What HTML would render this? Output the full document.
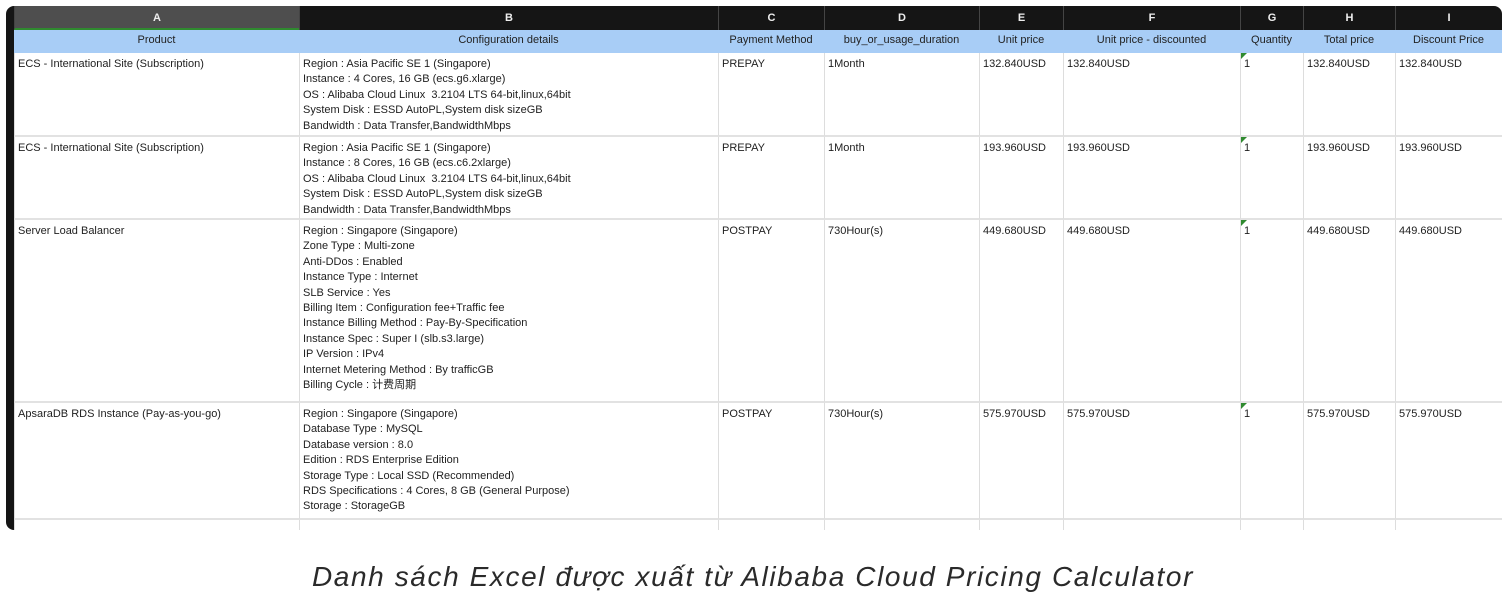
<!DOCTYPE html>
<html><head><meta charset="utf-8"><style>
body{margin:0;width:1506px;height:608px;background:#fff;position:relative;overflow:hidden;font-family:"Liberation Sans","Noto Sans CJK SC",sans-serif;}
.frame{position:absolute;left:6px;top:6px;width:1496px;height:524px;background:#fff;border-radius:8px 8px 0 8px;overflow:hidden;}
.hd{position:absolute;top:0;height:24px;background:#151515;color:#eee;font-size:11px;font-weight:bold;text-align:center;line-height:24px;box-sizing:border-box;border-left:1px solid #444;}
.bl{position:absolute;top:24px;height:23px;background:#a8cdf6;color:#222;font-size:11px;text-align:center;line-height:20px;box-sizing:border-box;}
.c{position:absolute;font-size:11px;color:#1e1e1e;line-height:15.4px;padding:4px 0 0 3px;box-sizing:border-box;border-left:1px solid #ddd;border-bottom:2px solid #e2e2e2;white-space:nowrap;}
.q::before{content:"";position:absolute;left:0;top:0;border-top:6px solid #2f8a2f;border-right:6px solid transparent;}
.cap{position:absolute;left:0;width:1506px;top:561px;text-align:center;font-style:italic;font-size:28px;color:#2a2a2a;letter-spacing:1.6px;}
</style></head><body>
<div class="frame">
<div class="hd" style="left:8px;width:285px;background:#4e4e4e;border-bottom:2px solid #2f8a2f">A</div>
<div class="hd" style="left:293px;width:419px">B</div>
<div class="hd" style="left:712px;width:106px">C</div>
<div class="hd" style="left:818px;width:155px">D</div>
<div class="hd" style="left:973px;width:84px">E</div>
<div class="hd" style="left:1057px;width:177px">F</div>
<div class="hd" style="left:1234px;width:63px">G</div>
<div class="hd" style="left:1297px;width:92px">H</div>
<div class="hd" style="left:1389px;width:107px">I</div>
<div class="bl" style="left:8px;width:285px">Product</div>
<div class="bl" style="left:293px;width:419px">Configuration details</div>
<div class="bl" style="left:712px;width:106px">Payment Method</div>
<div class="bl" style="left:818px;width:155px">buy_or_usage_duration</div>
<div class="bl" style="left:973px;width:84px">Unit price</div>
<div class="bl" style="left:1057px;width:177px">Unit price - discounted</div>
<div class="bl" style="left:1234px;width:63px">Quantity</div>
<div class="bl" style="left:1297px;width:92px">Total price</div>
<div class="bl" style="left:1389px;width:107px">Discount Price</div>
</div>
<div class="cap">Danh sách Excel được xuất từ Alibaba Cloud Pricing Calculator</div>
<div style="position:absolute;left:6px;top:6px;width:1496px;height:524px;overflow:hidden;pointer-events:none">
<div class="c" style="left:8px;top:47px;width:285px;height:84px">ECS - International Site (Subscription)</div>
<div class="c" style="left:293px;top:47px;width:419px;height:84px">Region : Asia Pacific SE 1 (Singapore)<br>Instance : 4 Cores, 16 GB (ecs.g6.xlarge)<br>OS : Alibaba Cloud Linux&nbsp; 3.2104 LTS 64-bit,linux,64bit<br>System Disk : ESSD AutoPL,System disk sizeGB<br>Bandwidth : Data Transfer,BandwidthMbps</div>
<div class="c" style="left:712px;top:47px;width:106px;height:84px">PREPAY</div>
<div class="c" style="left:818px;top:47px;width:155px;height:84px">1Month</div>
<div class="c" style="left:973px;top:47px;width:84px;height:84px">132.840USD</div>
<div class="c" style="left:1057px;top:47px;width:177px;height:84px">132.840USD</div>
<div class="c q" style="left:1234px;top:47px;width:63px;height:84px">1</div>
<div class="c" style="left:1297px;top:47px;width:92px;height:84px">132.840USD</div>
<div class="c" style="left:1389px;top:47px;width:107px;height:84px">132.840USD</div>

<div class="c" style="left:8px;top:131px;width:285px;height:83px">ECS - International Site (Subscription)</div>
<div class="c" style="left:293px;top:131px;width:419px;height:83px">Region : Asia Pacific SE 1 (Singapore)<br>Instance : 8 Cores, 16 GB (ecs.c6.2xlarge)<br>OS : Alibaba Cloud Linux&nbsp; 3.2104 LTS 64-bit,linux,64bit<br>System Disk : ESSD AutoPL,System disk sizeGB<br>Bandwidth : Data Transfer,BandwidthMbps</div>
<div class="c" style="left:712px;top:131px;width:106px;height:83px">PREPAY</div>
<div class="c" style="left:818px;top:131px;width:155px;height:83px">1Month</div>
<div class="c" style="left:973px;top:131px;width:84px;height:83px">193.960USD</div>
<div class="c" style="left:1057px;top:131px;width:177px;height:83px">193.960USD</div>
<div class="c q" style="left:1234px;top:131px;width:63px;height:83px">1</div>
<div class="c" style="left:1297px;top:131px;width:92px;height:83px">193.960USD</div>
<div class="c" style="left:1389px;top:131px;width:107px;height:83px">193.960USD</div>

<div class="c" style="left:8px;top:214px;width:285px;height:183px">Server Load Balancer</div>
<div class="c" style="left:293px;top:214px;width:419px;height:183px">Region : Singapore (Singapore)<br>Zone Type : Multi-zone<br>Anti-DDos : Enabled<br>Instance Type : Internet<br>SLB Service : Yes<br>Billing Item : Configuration fee+Traffic fee<br>Instance Billing Method : Pay-By-Specification<br>Instance Spec : Super I (slb.s3.large)<br>IP Version : IPv4<br>Internet Metering Method : By trafficGB<br>Billing Cycle : 计费周期</div>
<div class="c" style="left:712px;top:214px;width:106px;height:183px">POSTPAY</div>
<div class="c" style="left:818px;top:214px;width:155px;height:183px">730Hour(s)</div>
<div class="c" style="left:973px;top:214px;width:84px;height:183px">449.680USD</div>
<div class="c" style="left:1057px;top:214px;width:177px;height:183px">449.680USD</div>
<div class="c q" style="left:1234px;top:214px;width:63px;height:183px">1</div>
<div class="c" style="left:1297px;top:214px;width:92px;height:183px">449.680USD</div>
<div class="c" style="left:1389px;top:214px;width:107px;height:183px">449.680USD</div>

<div class="c" style="left:8px;top:397px;width:285px;height:117px">ApsaraDB RDS Instance (Pay-as-you-go)</div>
<div class="c" style="left:293px;top:397px;width:419px;height:117px">Region : Singapore (Singapore)<br>Database Type : MySQL<br>Database version : 8.0<br>Edition : RDS Enterprise Edition<br>Storage Type : Local SSD (Recommended)<br>RDS Specifications : 4 Cores, 8 GB (General Purpose)<br>Storage : StorageGB</div>
<div class="c" style="left:712px;top:397px;width:106px;height:117px">POSTPAY</div>
<div class="c" style="left:818px;top:397px;width:155px;height:117px">730Hour(s)</div>
<div class="c" style="left:973px;top:397px;width:84px;height:117px">575.970USD</div>
<div class="c" style="left:1057px;top:397px;width:177px;height:117px">575.970USD</div>
<div class="c q" style="left:1234px;top:397px;width:63px;height:117px">1</div>
<div class="c" style="left:1297px;top:397px;width:92px;height:117px">575.970USD</div>
<div class="c" style="left:1389px;top:397px;width:107px;height:117px">575.970USD</div>

<div class="c" style="left:8px;top:514px;width:285px;height:20px;border-bottom:none"></div>
<div class="c" style="left:293px;top:514px;width:419px;height:20px;border-bottom:none"></div>
<div class="c" style="left:712px;top:514px;width:106px;height:20px;border-bottom:none"></div>
<div class="c" style="left:818px;top:514px;width:155px;height:20px;border-bottom:none"></div>
<div class="c" style="left:973px;top:514px;width:84px;height:20px;border-bottom:none"></div>
<div class="c" style="left:1057px;top:514px;width:177px;height:20px;border-bottom:none"></div>
<div class="c" style="left:1234px;top:514px;width:63px;height:20px;border-bottom:none"></div>
<div class="c" style="left:1297px;top:514px;width:92px;height:20px;border-bottom:none"></div>
<div class="c" style="left:1389px;top:514px;width:107px;height:20px;border-bottom:none"></div>
<div style="position:absolute;left:0;top:0;width:8px;height:524px;background:#151515;border-radius:8px 0 0 8px"></div>
</div>
</body></html>
